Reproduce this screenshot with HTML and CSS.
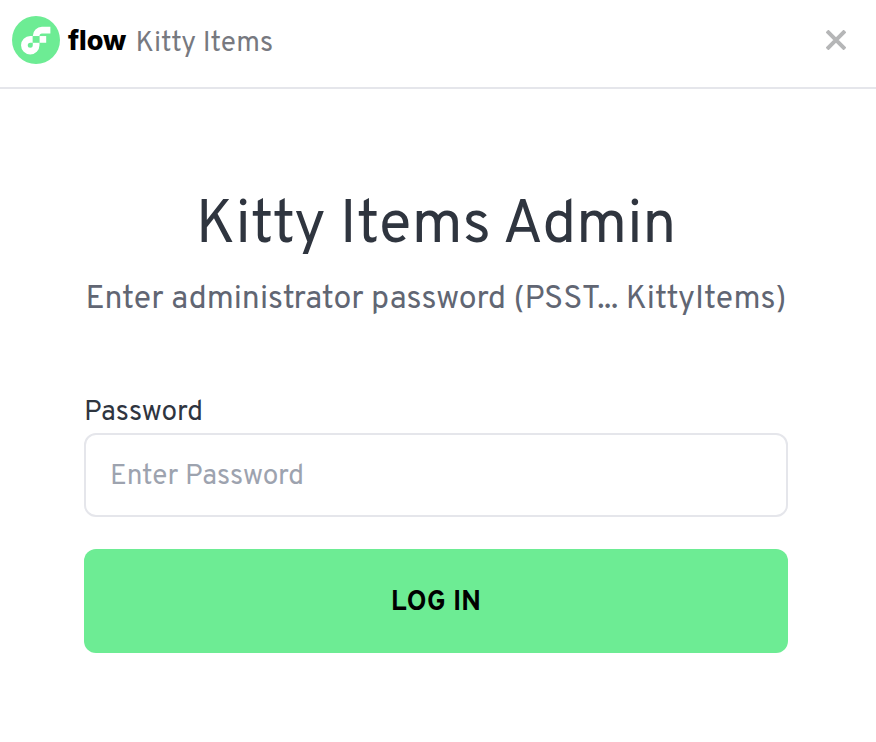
FILE: index.html
```html
<!DOCTYPE html>
<html lang="en">
<head>
<meta charset="utf-8">
<meta name="viewport" content="width=device-width, initial-scale=1">
<title>Kitty Items Admin</title>
<link rel="stylesheet" href="styles.css">
</head>
<body>
<header class="header">
  <div class="brand">
    <svg class="logo" viewBox="0 0 101 101" aria-hidden="true">
      <circle cx="50.5" cy="50.5" r="50.5" fill="#6dec94"/>
      <path fill="#fff" d="M57.82 42.18h14.12V56.3H57.82z"/>
      <path fill="#fff" d="M43.71 61.59a5.29 5.29 0 1 1-5.3-5.29h5.3V42.18h-5.3a19.41 19.41 0 1 0 19.41 19.41V56.3H43.71z"/>
      <path fill="#fff" d="M63.12 36.89h17.64V22.77H63.12a19.43 19.43 0 0 0-19.41 19.41V56.3h14.11V42.18a5.3 5.3 0 0 1 5.3-5.29z"/>
      <path fill="#6dec94" d="M43.71 42.18h14.11V56.3H43.71z"/>
    </svg>
    <span class="wordmark">flow</span>
    <span class="app-name">Kitty Items</span>
  </div>
  <button class="close" type="button" aria-label="Close">
    <svg class="close-icon" viewBox="0 0 20 20" aria-hidden="true"><path d="M1 1l18 18M19 1L1 19" fill="none" stroke="#b5b6b7" stroke-width="4"/></svg>
  </button>
</header>
<main class="content">
  <h1 class="title">Kitty Items Admin</h1>
  <p class="subtitle">Enter administrator password (PSST... KittyItems)</p>
  <form class="form">
    <label class="label" for="password">Password</label>
    <input class="input" id="password" type="password" placeholder="Enter Password">
    <button class="submit" type="submit">LOG IN</button>
  </form>
</main>
</body>
</html>
```
FILE: styles.css
```css
* {
  box-sizing: border-box;
}

body {
  margin: 0;
  background: #fff;
  color: #2f353f;
  font-family: Overpass, Roboto, sans-serif;
  font-size: 28px;
  line-height: 40px;
}

.header {
  display: flex;
  align-items: center;
  justify-content: space-between;
  padding: 16px 30px 23px 12px;
  border-bottom: 2px solid #e5e6eb;
}

.brand {
  display: flex;
  align-items: center;
}

.logo {
  width: 48px;
  height: 48px;
  margin-right: 8px;
}

.wordmark {
  margin-right: 9px;
  padding-top: 2px;
  color: #000;
  font-family: Inter, sans-serif;
  font-size: 27px;
  font-weight: 800;
}

.app-name {
  padding-top: 8px;
  color: #777980;
}

.close {
  display: flex;
  padding: 0;
  border: 0;
  background: none;
  cursor: pointer;
}

.close-icon {
  width: 20px;
  height: 20px;
}

.content {
  padding: 102px 88px 88px 84px;
}

.title {
  margin: 0;
  font-size: 60px;
  font-weight: 400;
  line-height: 72px;
  text-align: center;
}

.subtitle {
  margin: 17px 0 73px;
  color: #616673;
  font-size: 32px;
  text-align: center;
}

.form {
  display: flex;
  flex-direction: column;
}

.input {
  width: 100%;
  height: 84px;
  margin-bottom: 32px;
  padding: 4px 24px 0;
  border: 2px solid #e5e6eb;
  border-radius: 12px;
  background: #fff;
  color: inherit;
  font: inherit;
}

.input::placeholder {
  color: #9da3af;
  opacity: 1;
}

.submit {
  height: 104px;
  padding: 4px 24px 0;
  border: 0;
  border-radius: 12px;
  background: #6dec94;
  color: #000;
  font: inherit;
  font-weight: 700;
  cursor: pointer;
}
```
